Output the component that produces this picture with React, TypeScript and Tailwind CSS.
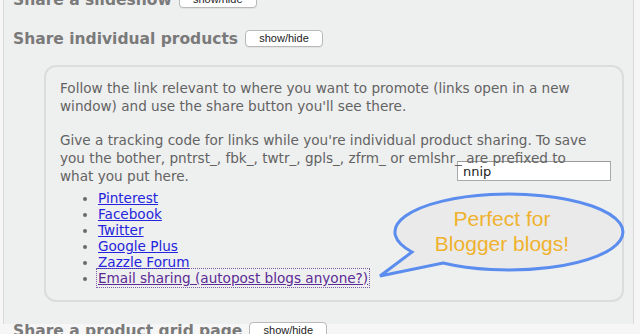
import React from "react";

function ToggleButton() {
  return (
    <button
      type="button"
      className="h-[17px] w-[78px] shrink-0 rounded-[4px] border border-[#b9b9b9] bg-white text-[11px] leading-none text-[#222] font-['Liberation_Sans',Arial,sans-serif] shadow-[0_1px_0_rgba(0,0,0,0.05)]"
    >
      show/hide
    </button>
  );
}

function Heading({ title, className }: { title: string; className?: string }) {
  return (
    <div className={"flex h-[20px] items-center gap-[7px] " + (className ?? "")}>
      <h2 className="whitespace-nowrap text-[15.5px] font-bold leading-[20px] text-[#7a7a7a]">
        {title}
      </h2>
      <ToggleButton />
    </div>
  );
}

const links = ["Pinterest", "Facebook", "Twitter", "Google Plus", "Zazzle Forum"];

export default function App() {
  return (
    <div className="relative h-[334px] w-[640px] overflow-hidden bg-[#f6f6f6] font-['DejaVu_Sans',Verdana,sans-serif]">
      <div className="ml-[3px] h-full w-[631px] border-x border-[#d9d9d9] bg-[#eeefef] pl-[9px]">
        <Heading title="Share a slideshow" className="mt-[-10.5px]" />
        <Heading title="Share individual products" className="mt-[19px]" />

        <div className="ml-[31px] mt-[16.5px] w-[580px] rounded-[12px] border-2 border-[#dcdcdc] pb-[14px] pl-[14px] pr-[22px] pt-[12px] text-[13.6px] leading-[18px] text-[#636363]">
          <p>
            Follow the link relevant to where you want to promote (links open in a new window) and
            use the share button you'll see there.
          </p>
          <p className="mt-[16px]">
            Give a tracking code for links while you're individual product sharing. To save you the
            bother, pntrst_, fbk_, twtr_, gpls_, zfrm_ or emlshr_ are prefixed to what you put here.
            <input
              readOnly
              value="nnip"
              className="float-right -mr-[11px] mt-[-6px] h-[20px] w-[154px] border border-[#a9a9a9] border-t-[#9a9a9a] bg-white pl-[5px] text-[13px] text-[#222] outline-none"
            />
          </p>
          <ul className="mt-[5px] list-disc pl-[38px] leading-[16px] marker:text-[#6a6a6a]">
            {links.map((l) => (
              <li key={l}>
                <a href="#" className="text-[#2424dc] underline">
                  {l}
                </a>
              </li>
            ))}
            <li>
              <a
                href="#"
                className="text-[#5a2a95] underline outline-1 outline-dotted outline-[#7b5aa6] outline-offset-[1px]"
              >
                Email sharing (autopost blogs anyone?)
              </a>
            </li>
          </ul>
        </div>

        <Heading title="Share a product grid page" className="mt-[18.5px]" />
      </div>

      <svg
        className="pointer-events-none absolute left-0 top-0"
        width="640"
        height="334"
        viewBox="0 0 640 334"
      >
        <path
          d="M412,252 L380,276 L443,263 A114 38 0 1 0 412,252 Z"
          fill="#eaeaea"
          stroke="#5b8def"
          strokeWidth="3"
          strokeLinejoin="miter"
        />
        <text
          x="502"
          y="226"
          textAnchor="middle"
          fontFamily="'Liberation Sans', Arial, sans-serif"
          fontSize="21"
          fill="#f0b22e"
        >
          Perfect for
        </text>
        <text
          x="502"
          y="251"
          textAnchor="middle"
          fontFamily="'Liberation Sans', Arial, sans-serif"
          fontSize="21"
          fill="#f0b22e"
        >
          Blogger blogs!
        </text>
      </svg>
    </div>
  );
}
